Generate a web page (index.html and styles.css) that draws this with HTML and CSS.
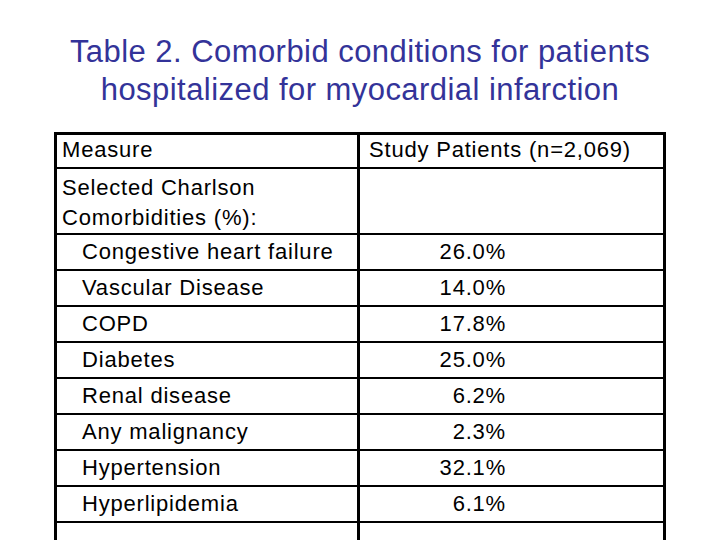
FILE: index.html
```html
<!DOCTYPE html>
<html>
<head>
<meta charset="utf-8">
<link rel="stylesheet" href="styles.css">
</head>
<body>
<div class="slide">
  <h1 class="title">Table 2. Comorbid conditions for patients<br>hospitalized for myocardial infarction</h1>
  <table class="data">
    <tr class="head">
      <td class="c1">Measure</td>
      <td class="c2">Study Patients (n=2,069)</td>
    </tr>
    <tr class="group">
      <td class="c1">Selected Charlson<br>Comorbidities (%):</td>
      <td class="c2"></td>
    </tr>
    <tr class="row"><td class="c1 ind">Congestive heart failure</td><td class="c2 num">26.0%</td></tr>
    <tr class="row"><td class="c1 ind">Vascular Disease</td><td class="c2 num">14.0%</td></tr>
    <tr class="row"><td class="c1 ind">COPD</td><td class="c2 num">17.8%</td></tr>
    <tr class="row"><td class="c1 ind">Diabetes</td><td class="c2 num">25.0%</td></tr>
    <tr class="row"><td class="c1 ind">Renal disease</td><td class="c2 num">6.2%</td></tr>
    <tr class="row"><td class="c1 ind">Any malignancy</td><td class="c2 num">2.3%</td></tr>
    <tr class="row"><td class="c1 ind">Hypertension</td><td class="c2 num">32.1%</td></tr>
    <tr class="row"><td class="c1 ind">Hyperlipidemia</td><td class="c2 num">6.1%</td></tr>
    <tr class="row last"><td class="c1 ind">&nbsp;</td><td class="c2 num">&nbsp;</td></tr>
  </table>
</div>
</body>
</html>
```
FILE: styles.css
```css
html, body {
  margin: 0;
  padding: 0;
  background: #ffffff;
}
body {
  width: 720px;
  height: 540px;
  overflow: hidden;
  font-family: "Liberation Sans", Arial, sans-serif;
}
.slide {
  padding-top: 33px;
}
.title {
  margin: 0;
  font-weight: normal;
  font-size: 31px;
  line-height: 38px;
  letter-spacing: 0.45px;
  text-align: center;
  color: #333399;
}
.data {
  margin: 23px 0 0 54px;
  width: 612px;
  border: 3px solid #000;
  border-spacing: 0;
  border-collapse: separate;
  table-layout: fixed;
  font-size: 22px;
  line-height: 30px;
  letter-spacing: 0.8px;
  color: #000;
}
.data td {
  box-sizing: border-box;
  padding: 0;
  border-bottom: 2px solid #000;
  vertical-align: top;
  white-space: nowrap;
}
.data .c1 {
  width: 303px;
  border-right: 3px solid #000;
  padding-left: 5px;
}
.data .c2 {
  padding-left: 9px;
}
.head td {
  height: 34px;
  padding-top: 0;
}
.group td {
  height: 66px;
  padding-top: 4px;
}
.row td {
  height: 36px;
  padding-top: 2px;
}
.data .ind {
  padding-left: 25px;
}
.data .num {
  text-align: right;
  padding-left: 0;
  padding-right: 157px;
}
```
